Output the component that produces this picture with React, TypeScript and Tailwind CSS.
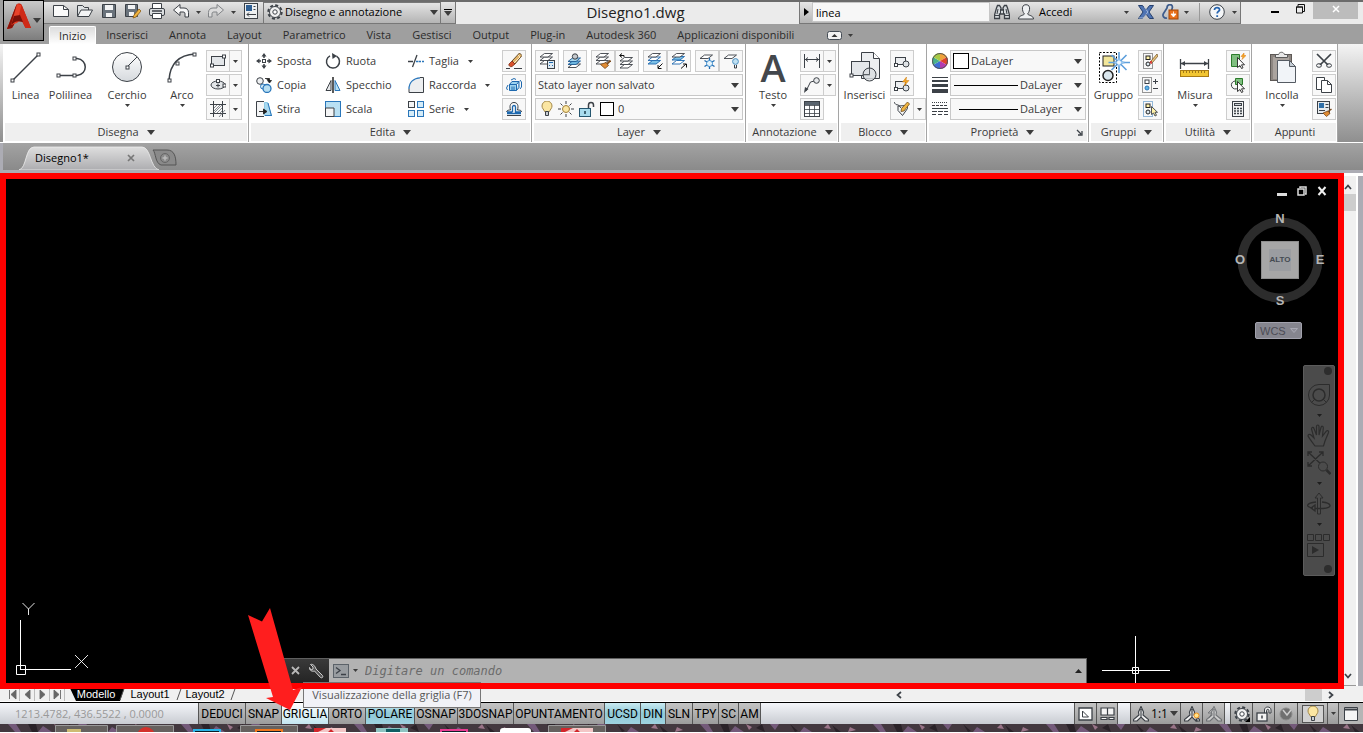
import type { ReactNode } from "react"

type IconProps = { w?: number; h?: number; className?: string; children: ReactNode }

function Icon({ w = 16, h = 16, className = "", children }: IconProps) {
  return (
    <svg
      width={w}
      height={h}
      viewBox={`0 0 ${w} ${h}`}
      fill="none"
      stroke="#3c4147"
      className={`shrink-0 ${className}`}
      aria-hidden
    >
      {children}
    </svg>
  )
}

function Caret({ big = false, className = "" }: { big?: boolean; className?: string }) {
  return big ? (
    <svg width="8" height="5" viewBox="0 0 8 5" className={`shrink-0 ${className}`} aria-hidden>
      <path d="M0 0h8L4 5z" fill="#3c3c3c" />
    </svg>
  ) : (
    <svg width="5" height="3" viewBox="0 0 5 3" className={`shrink-0 ${className}`} aria-hidden>
      <path d="M0 0h5L2.5 3z" fill="#3c3c3c" />
    </svg>
  )
}

const node = (x: number, y: number) => (
  <rect x={x - 1.5} y={y - 1.5} width="3" height="3" fill="#fff" stroke="#3c4147" />
)

/* ---------- big ribbon icons ---------- */

const LineIcon = () => (
  <Icon w={32} h={32}>
    <path d="M3 29L29 3" strokeWidth="1.5" />
    {node(2.5, 29.5)}
    {node(28.5, 3.5)}
  </Icon>
)
const PolylineIcon = () => (
  <Icon w={32} h={32}>
    <path d="M3 24.5H19.5M19 7.5h3c11 1 11 16 0 17h-3" strokeWidth="1.5" />
    {node(3.5, 24.5)}
    {node(19.5, 24.5)}
    {node(19.5, 7.5)}
  </Icon>
)
const CircleIcon = () => (
  <Icon w={32} h={32}>
    <defs>
      <linearGradient id="disc" x1="0" y1="0" x2="0" y2="1">
        <stop offset="0" stopColor="#fff" />
        <stop offset="1" stopColor="#d5d9dd" />
      </linearGradient>
    </defs>
    <circle cx="16" cy="16" r="14.5" fill="url(#disc)" />
    <path d="M16 16L26 6" />
    {node(16.5, 16.5)}
  </Icon>
)
const ArcIcon = () => (
  <Icon w={32} h={32}>
    <path d="M3 29C4 14 12 4 29 3" strokeWidth="1.5" />
    {node(3.5, 29.5)}
    {node(11.5, 12.5)}
    {node(28.5, 3.5)}
  </Icon>
)
const InsertBlockIcon = () => (
  <Icon w={34} h={32}>
    <path d="M13.5 1.5h12l6 6v20h-18z" fill="#eceef0" />
    <path d="M25.5 1.5v6h6" fill="#fff" />
    <rect x="3.5" y="10.5" width="18" height="14" fill="#e4e7ea" />
    <circle cx="21.5" cy="23.5" r="6.5" fill="#d9dde1" fillOpacity="0.8" />
    <path d="M15 23.5h6.5V17" strokeWidth="0.8" />
    {node(3.5, 24.5)}
  </Icon>
)
const GroupIcon = () => (
  <Icon w={32} h={34}>
    <rect x="1.5" y="2.5" width="17" height="30" stroke="#000" strokeDasharray="2 1.5" />
    <rect x="5" y="6" width="11" height="10" fill="#f3e79b" stroke="#222" />
    <circle cx="10" cy="25.5" r="5" fill="#dbe7ee" stroke="#222" strokeWidth="1.5" />
    <path d="M21 2v21M10.500 12.500H32M13.500 5l15 15M28.500 5l-15 15" stroke="#5d9fdc" strokeWidth="1.6" />
    <path d="M21 6l1.500 5 5 1.500-5 1.500-1.500 5-1.500-5-5-1.500 5-1.500z" fill="#9fcbf2" stroke="#5d9fdc" strokeWidth="0.5" />
    <circle cx="21" cy="12.5" r="2" fill="#f2f9ff" stroke="none" />
  </Icon>
)
const MeasureIcon = () => (
  <Icon w={32} h={32}>
    <path d="M1.5 8v10M29.5 8v10M2 12.500h27" strokeWidth="1.3" />
    <path d="M2 12.500l4-2.500v5zM29 12.500l-4-2.500v5z" fill="#3c4147" stroke="none" />
    <rect x="1.5" y="19.5" width="28" height="6" fill="#f2c531" stroke="#a97a12" />
    <path d="M4.500 20v2M7.500 20v2M10.500 20v2M13.500 20v2M16.500 20v2M19.500 20v2M22.500 20v2M25.500 20v2" stroke="#8a6510" strokeWidth="0.8" />
  </Icon>
)
const PasteIcon = () => (
  <Icon w={32} h={34}>
    <rect x="4.5" y="4.5" width="21" height="26" fill="#8d8681" stroke="#5e5956" />
    <rect x="7" y="7" width="16" height="22" fill="#aaa39e" stroke="none" />
    <path d="M9.500 7.500v-3h3c1-3 5-3 6 0h3v3z" fill="#e8e8e8" stroke="#5a5a5a" />
    <path d="M11.500 10.500h12l6 6v16h-18z" fill="#f1f4f8" stroke="#555b63" />
    <path d="M23.500 10.500v6h6z" fill="#c6ced6" stroke="#555b63" />
  </Icon>
)

/* ---------- small ribbon icons ---------- */

const RectIcon = () => (
  <Icon>
    <rect x="1.5" y="3.5" width="13" height="9" fill="#e3e6e9" />
    {node(2, 12.5)}
    {node(14, 3.5)}
  </Icon>
)
const EllipseIcon = () => (
  <Icon>
    <ellipse cx="8" cy="8" rx="7" ry="4" fill="#e3e6e9" />
    <path d="M6 8.500h4M8 6.500v4" />
    {node(8, 4)}
    {node(14.5, 8.5)}
  </Icon>
)
const HatchIcon = () => (
  <Icon>
    <path d="M3.5 0v16M12.5 0v16M0 3.5h16M0 12.500h16" />
    <path d="M4 7l3-3M4 10l6-6M4 12l8-8M7 12l5-5M10 12l2-2M9 16l6-7" stroke="#6a7077" strokeWidth="0.8" />
  </Icon>
)
const MoveIcon = () => (
  <Icon>
    <path d="M8 0l2.500 3.500h-5zM8 16l2.500-3.500h-5zM0 8l3.500-2.500v5zM16 8l-3.500-2.500v5z" fill="#3c4147" stroke="none" />
    <path d="M8 3v2M8 11v2M3 8h2M11 8h2" strokeWidth="1.5" />
    <rect x="6.5" y="6.5" width="3" height="3" fill="#fff" />
  </Icon>
)
const CopyIcon = () => (
  <Icon>
    <circle cx="4" cy="4" r="3.3" fill="#eef0f2" />
    <path d="M9 1.500h4.500V4M11.500 3.500l2 2.500 2-2.500z" fill="#222" stroke="#222" strokeWidth="0.8" />
    <circle cx="7" cy="9.5" r="2.5" stroke="#2a76ba" fill="#d5ecf8" />
    <circle cx="11" cy="11.5" r="4" stroke="#2a76ba" fill="#b7def2" strokeWidth="1.3" />
  </Icon>
)
const StretchIcon = () => (
  <Icon>
    <path d="M8.500 1.500h3l4 13h-7z" fill="#a9d9ef" stroke="#8ccae6" />
    <path d="M9 14.500h6.500M12 2l3.500 13" stroke="#2a76ba" />
    <path d="M8 .5H.5v15H8" fill="#f4f5f6" />
    <path d="M3 10.500h6M7.500 8l3.500 2.500L7.500 13z" fill="#222" stroke="#222" strokeWidth="0.9" />
  </Icon>
)
const RotateIcon = () => (
  <Icon>
    <path d="M5 2.800a6.500 6.500 0 1 0 6.500.3" strokeWidth="1.5" />
    <path d="M7 0l5 3-4.500 3z" fill="#3c4147" stroke="none" />
  </Icon>
)
const MirrorIcon = () => (
  <Icon>
    <path d="M6 3.500v10H1z" fill="#e6e8ea" />
    <path d="M10 3.500v10h5z" fill="#b9e0f3" stroke="#2a76ba" />
    <path d="M8 0v16" stroke="#000" strokeWidth="1.3" />
  </Icon>
)
const ScaleIcon = () => (
  <Icon>
    <rect x=".5" y=".5" width="15" height="15" fill="#b9e0f3" stroke="#2a76ba" />
    <path d="M.5 7v8.500H9V7z" fill="#f4f5f6" />
  </Icon>
)
const TrimIcon = () => (
  <Icon>
    <path d="M0 8.500h5M4.500 14L9 2" strokeWidth="1.3" />
    <path d="M8 8.500h2.500M11 8.500h2M14 8.500h2" stroke="#2a76ba" strokeWidth="1.3" />
  </Icon>
)
const FilletIcon = () => (
  <Icon>
    <path d="M1 15C1 6 6 1 13 1h2.500v14.500H.5z" fill="#eceef0" stroke="none" />
    <path d="M12 .5h3.500v15H1V12" />
    <path d="M1 12C1 5 6 1 12 .8" stroke="#2a76ba" strokeWidth="1.3" />
  </Icon>
)
const ArrayIcon = () => (
  <Icon>
    <rect x=".5" y=".5" width="6" height="6" fill="#f3f4f5" />
    <rect x="9.5" y=".5" width="6" height="6" stroke="#2a76ba" fill="#d5ecf8" />
    <rect x=".5" y="9.5" width="6" height="6" stroke="#2a76ba" fill="#d5ecf8" />
    <rect x="9.5" y="9.5" width="6" height="6" stroke="#2a76ba" fill="#d5ecf8" />
  </Icon>
)
const EraseIcon = () => (
  <Icon>
    <path d="M13.500 0L6 8l3 3 7-8.500z" fill="#e2b46a" stroke="#5a3f1c" strokeWidth="0.9" />
    <path d="M12 2l2 2-6 6" stroke="#fbe9c4" />
    <path d="M6 8l-3 3c-.8 1.500 1.500 3.500 3 2.500L9 11z" fill="#d9502b" stroke="#7c2e16" strokeWidth="0.8" />
    <path d="M0 15.500h4M8 15.500h8" />
  </Icon>
)
const ExplodeIcon = () => (
  <Icon>
    <path d="M3.500 7.500h7v6h-7zM3.500 7.500l2.500-3h7l-2.500 3M10.500 13.500l2.500-3v-6" fill="#9dd4ef" stroke="#1d68ae" />
    <path d="M2 8l-1.500 3 1 2M5 3L8 1.500l2 1M14 3l1.500 2v5L14 12M6 9.500v4M8 9.500v4" stroke="#1d68ae" />
  </Icon>
)
const OffsetIcon = () => (
  <Icon>
    <path d="M1 14.500h14M.5 11C1 9 3 9 4.500 9 3 4 5 1.500 8 1.500S13 4 11.500 9c2 0 4 0 4 2" />
    <path d="M1 12.500h14M6.500 11V6a1.500 1.500 0 0 1 3 0v5H15M1 11h5.500" stroke="#1d68ae" strokeWidth="1.3" />
  </Icon>
)

const stack = (y: number, fill: string, stroke: string) => (
  <path d={`M1 ${y + 3.5}h8l4.500-3.500h-8z`} fill={fill} stroke={stroke} strokeWidth="0.9" />
)
const LayerPropsIcon = () => (
  <Icon>
    {stack(7.5, "#fff", "#3c4147")}
    {stack(4, "#fff", "#3c4147")}
    {stack(0.5, "#fff", "#3c4147")}
    <rect x="8.5" y="7.5" width="7" height="8" fill="#dfeaf2" />
    <path d="M10 9.500h4M10 12.500h1M13 12.500h1" stroke="#1d68ae" />
  </Icon>
)
const LayerCurrentIcon = () => (
  <Icon>
    {stack(11, "#fff", "#3c4147")}
    {stack(8, "#6db6df", "#1d5a94")}
    {stack(5, "#a9d8ee", "#1d5a94")}
    <circle cx="8" cy="3.5" r="2.7" fill="#c4c8cc" />
  </Icon>
)
const LayerMatchIcon = () => (
  <Icon>
    {stack(7.5, "#fff", "#3c4147")}
    {stack(4, "#fff", "#3c4147")}
    {stack(0.5, "#fff", "#3c4147")}
    <path d="M15.500 7.500l-4 4" stroke="#7a4a1d" strokeWidth="1.8" />
    <path d="M5.500 11.500l5.500-2 2.500 3-3.500 3z" fill="#e08b33" stroke="#7a4a1d" strokeWidth="0.8" />
  </Icon>
)
const LayerPrevIcon = () => (
  <Icon>
    {stack(11.5, "#fff", "#3c4147")}
    {stack(8, "#fff", "#3c4147")}
    {stack(4.5, "#fff", "#3c4147")}
    <path d="M5 4V2.500H1M3 .5L.5 2.500 3 4.500" stroke="#111" />
  </Icon>
)
const LayerIsoIcon = ({ out = false }: { out?: boolean }) => (
  <Icon>
    {stack(out ? 3.5 : 7.5, "#7cc0e6", "#1d68ae")}
    {stack(out ? 7.5 : 4, "#fff", "#1d68ae")}
    {stack(0.5, "#fff", "#3c4147")}
    {out ? <path d="M10 15.500l5-4.500M12 11h3.500v3.500" stroke="#111" /> : <path d="M15.500 10.500l-4.500 4.500M14.500 15.500H11V12" stroke="#111" />}
  </Icon>
)
const LayerFreezeIcon = () => (
  <Icon>
    {stack(2, "#fff", "#3c4147")}
    <path d="M10.500 5v11M5.500 7.500l10 6M15.500 7.500l-10 6" stroke="#1d68ae" strokeWidth="1.3" />
    <circle cx="10.5" cy="10.5" r="3" stroke="#3c8ccc" fill="#e4f3fb" />
  </Icon>
)
const LayerOffIcon = () => (
  <Icon>
    {stack(2, "#fff", "#3c4147")}
    <circle cx="12.5" cy="8.5" r="2.9" fill="#bfe0f2" stroke="#4d8fc0" />
    <path d="M11.500 12v3h2v-3" stroke="#3c4147" />
  </Icon>
)
const BulbIcon = () => (
  <Icon w={12}>
    <path d="M3.500 10.500C3 8.500 1 7.500 1 5a5 5 0 0 1 10 0c0 2.500-2 3.500-2.500 5.500z" fill="#fbe6a2" stroke="#a58a4a" />
    <path d="M4.500 10.500h3v4h-3z" fill="#c9cdd1" />
  </Icon>
)
const SunIcon = () => (
  <Icon>
    <path d="M8 0v3M8 13v3M0 8h3M13 8h3M2.500 2.500l2 2M11.500 11.500l2 2M13.500 2.500l-2 2M4.500 11.500l-2 2" />
    <circle cx="8" cy="8" r="3.5" fill="#fbe6a2" stroke="#a17f37" />
  </Icon>
)
const UnlockIcon = () => (
  <Icon>
    <path d="M9.500 8V4c0-3.500 5-3.500 5 0v2" strokeWidth="1.5" />
    <rect x=".5" y="7.5" width="11" height="8" fill="#a9dcee" stroke="#25566f" />
    <path d="M6 10v3" stroke="#1b3c4d" strokeWidth="1.5" />
  </Icon>
)

const DimIcon = () => (
  <Icon>
    <path d="M.5 1v14M15.500 1v14M1 6.500h14M4 4.500L1.500 6.500 4 8.500M12 4.500l2.500 2L12 8.500" />
  </Icon>
)
const LeaderIcon = () => (
  <Icon>
    <path d="M2 14L6.500 5l4-1" />
    <path d="M0 16l1-6 3.500 2z" fill="#3c4147" stroke="none" />
    <circle cx="12.5" cy="3.5" r="2.8" fill="#e6e8ea" />
  </Icon>
)
const TableIcon = () => (
  <Icon>
    <rect x=".5" y=".5" width="15" height="15" fill="#fff" />
    <path d="M1 1h14v3H1z" fill="#59636d" stroke="none" />
    <path d="M1 4.500h14M1 8.500h14M1 12.500h14M5.500 4v11M10.500 4v11" strokeWidth="0.8" />
  </Icon>
)
const CreateBlockIcon = ({ bolt = false }: { bolt?: boolean }) => (
  <Icon>
    <rect x="1.5" y="4.5" width="10" height="7" fill="#eceef0" />
    <circle cx="12" cy="11" r="3" fill="#dfe3e6" />
    {node(2, 12)}
    {bolt && <path d="M12.500 0L8.500 5h3L10 9l5-5.500h-3z" fill="#f7a823" stroke="#c9760c" strokeWidth="0.5" />}
  </Icon>
)
const EditAttrIcon = () => (
  <Icon>
    <path d="M4 5l9-.5.5 3-5 7-4.500-5z" fill="#f4f5f6" />
    <path d="M0 1c1 2 2 3 4.500 3L7 7" />
    <path d="M13.500 1L7.500 7.500l-.5 3 3-.5 5.500-7z" fill="#f0b440" stroke="#6b4a1c" strokeWidth="0.8" />
  </Icon>
)
const ColorWheel = () => (
  <Icon>
    <g stroke="none">
      <path d="M8 8L8 0A8 8 0 0 1 15 4z" fill="#f0a23a" />
      <path d="M8 8L15 4A8 8 0 0 1 15 12z" fill="#e0412d" />
      <path d="M8 8L15 12A8 8 0 0 1 8 16z" fill="#b43ab0" />
      <path d="M8 8L8 16A8 8 0 0 1 1 12z" fill="#3f6fd6" />
      <path d="M8 8L1 12A8 8 0 0 1 1 4z" fill="#49b28a" />
      <path d="M8 8L1 4A8 8 0 0 1 8 0z" fill="#a8ca45" />
    </g>
    <circle cx="8" cy="8" r="7.5" stroke="#555" />
  </Icon>
)
const WeightIcon = () => (
  <Icon>
    <path d="M0 .5h16" />
    <path d="M0 4h16" strokeWidth="2" />
    <path d="M0 8.500h16" strokeWidth="3" />
    <path d="M0 14h16" strokeWidth="4" />
  </Icon>
)
const LinetypeIcon = () => (
  <Icon>
    <path d="M0 1.500h16" strokeDasharray="1 1" />
    <path d="M0 4.500h16" strokeDasharray="3 1" />
    <path d="M0 7.500h16" />
    <path d="M0 10.500h16" strokeDasharray="5 1" />
    <path d="M0 13.500h16" strokeDasharray="4 2" />
  </Icon>
)

const groupBase = (stroke: string) => (
  <>
    <rect x="1.5" y=".5" width="9" height="15" stroke={stroke} strokeDasharray="1 1" />
    <rect x="4" y="3" width="4" height="3.5" fill="#fff2a8" stroke="#222" />
    <circle cx="6" cy="11" r="2" fill="#dbe7ee" stroke="#222" />
  </>
)
const UngroupIcon = () => (
  <Icon>
    {groupBase("#333")}
    <path d="M15 1L9 8l1.500 1.500L16 3z" fill="#e8c37a" stroke="#6b4a1c" strokeWidth="0.7" />
    <path d="M9 8l-1 1.500 1.500 1z" fill="#d9302b" stroke="#d9302b" />
  </Icon>
)
const GroupEditIcon = () => (
  <Icon>
    <rect x=".5" y=".5" width="9" height="15" stroke="#333" strokeDasharray="1 1" />
    <rect x="3" y="3" width="4" height="3.5" fill="#fff" />
    <circle cx="5" cy="11" r="2" fill="#5fb4e0" stroke="#2a76ba" />
    <path d="M11 4.500h5M13.500 2v5M11 11.500h5" />
  </Icon>
)
const GroupSelectIcon = () => (
  <Icon>
    {groupBase("#2a76ba")}
    <path d="M9.500 5.500v8l2-1.500 1.500 3 1.500-.7-1.500-3h2.500z" fill="#fff2a8" strokeWidth="0.9" />
  </Icon>
)
const pointer = <path d="M7.500 4.500v10l2.500-2 1.500 3 1.500-.7-1.500-3h3z" fill="#fff" stroke="#222" strokeWidth="0.9" />
const QuickSelectIcon = () => (
  <Icon>
    <path d="M1.500 1.500h8v12h-8z" fill="#7fbf7f" stroke="#2b7a2b" />
    {pointer}
    <path d="M14 0l-3 3.500h2l-1 3 4-4h-2z" fill="#f7a823" stroke="#d9760c" strokeWidth="0.5" />
  </Icon>
)
const SelectAllIcon = () => (
  <Icon>
    <path d="M5.500 1.500h7v6h-7z" fill="#7fbf7f" stroke="#2b7a2b" />
    <path d="M5 4a4 4 0 1 0 3 7" />
    {pointer}
  </Icon>
)
const CalcIcon = () => (
  <Icon>
    <rect x="2.5" y=".5" width="11" height="15" fill="#f3f4f5" />
    <rect x="4.5" y="2.5" width="7" height="2" fill="#cfd4d8" />
    <path d="M4 7.500h8M4 10h8M4 12.500h8" strokeDasharray="2 1" strokeWidth="1.3" />
  </Icon>
)
const CutIcon = () => (
  <Icon>
    <path d="M1 1l11 11M15 1L4 12" strokeWidth="1.7" />
    <ellipse cx="3" cy="12.5" rx="2.5" ry="1.8" />
    <ellipse cx="13" cy="12.5" rx="2.5" ry="1.8" />
  </Icon>
)
const CopyClipIcon = () => (
  <Icon>
    <path d="M5 12.500H.5V.5h8V3" fill="#fff" />
    <path d="M5.500 3.500h6l4 4v8h-10z" fill="#fff" />
    <path d="M11.500 3.500v4h4" />
  </Icon>
)
const MatchPropIcon = () => (
  <Icon>
    <rect x="1.5" y=".5" width="12" height="12" fill="#e7ebee" />
    <rect x="3" y="2" width="5" height="5" fill="#2f6fa8" stroke="none" />
    <path d="M9.500 3.500h3M9.500 6.500h3M3 9.500h6" />
    <path d="M15.500 8l-4 3" stroke="#7a4a1d" strokeWidth="1.5" />
    <path d="M7 12l5-2 2 2.500-3.500 3z" fill="#e08b33" stroke="#7a4a1d" strokeWidth="0.8" />
  </Icon>
)

/* ---------- ribbon building blocks ---------- */

function Panel({ title, width, caret = true, launcher = false, children }: {
  title: string
  width: string
  caret?: boolean
  launcher?: boolean
  children: ReactNode
}) {
  return (
    <section className={`flex shrink-0 flex-col border-r border-[#a5a5a5] bg-white ${width}`} aria-label={title}>
      <div className="flex h-[79px] pt-[6px]">{children}</div>
      <div className="mr-px ml-[2px] flex h-[18px] items-center bg-[#efefef]">
        <button type="button" className="flex flex-1 items-center justify-center gap-2">
          {title}
          {caret && <Caret big />}
        </button>
        {launcher && (
          <button type="button" aria-label="Apri finestra" className="mr-1">
            <Icon w={7} h={7}>
              <path d="M1 1l4 4M6 2v4H2" strokeWidth="1.3" />
            </Icon>
          </button>
        )}
      </div>
    </section>
  )
}

function BigButton({ label, width, caret = false, children }: {
  label: string
  width: string
  caret?: boolean
  children: ReactNode
}) {
  return (
    <button type="button" className={`flex h-[70px] shrink-0 flex-col items-center ${width}`}>
      <span className="flex h-[34px] items-center">{children}</span>
      <span className="mt-[3px] h-4 leading-4">{label}</span>
      {caret && <Caret className="mt-px" />}
    </button>
  )
}

function Small({ label, caret = false, children }: { label: string; caret?: boolean; children: ReactNode }) {
  return (
    <div className="flex h-[22px] w-max border border-[#cdcdcd] bg-[#f8f8f8]">
      <button type="button" aria-label={label} className="flex w-[22px] items-center justify-center">
        {children}
      </button>
      {caret && (
        <button
          type="button"
          aria-label={`${label}, altre opzioni`}
          className="flex w-3 items-center justify-center border-l border-[#cdcdcd]"
        >
          <Caret />
        </button>
      )}
    </div>
  )
}

function Tool({ label, caret = false, children }: { label: string; caret?: boolean; children: ReactNode }) {
  return (
    <button type="button" className="flex h-[22px] items-center gap-[5px]">
      {children}
      <span>{label}</span>
      {caret && <Caret className="ml-1" />}
    </button>
  )
}

function Combo({ label, value, width, children }: {
  label: string
  value: string
  width: string
  children?: ReactNode
}) {
  return (
    <div className={`relative flex h-[22px] items-center border border-[#c8c8c8] bg-[#f8f8f8] ${width}`}>
      {children}
      <select aria-label={label} defaultValue={value} className="h-full min-w-0 flex-1 appearance-none bg-transparent pl-[2px] outline-none">
        <option>{value}</option>
      </select>
      <Caret big className="pointer-events-none absolute right-[3px]" />
    </div>
  )
}

const col = "flex flex-col gap-[2px]"

function Ribbon() {
  return (
    <div className="flex h-[99px] border-b border-white bg-linear-to-b from-[#f4f4f4] to-[#8f8f8f] pl-[3px]">
      <Panel title="Disegna" width="w-[246px]">
        <BigButton label="Linea" width="w-[45px]"><LineIcon /></BigButton>
        <BigButton label="Polilinea" width="w-[45px]"><PolylineIcon /></BigButton>
        <BigButton label="Cerchio" width="w-[68px]" caret><CircleIcon /></BigButton>
        <BigButton label="Arco" width="w-[42px]" caret><ArcIcon /></BigButton>
        <div className={`ml-[3px] ${col}`}>
          <Small label="Rettangolo" caret><RectIcon /></Small>
          <Small label="Ellisse" caret><EllipseIcon /></Small>
          <Small label="Tratteggio" caret><HatchIcon /></Small>
        </div>
      </Panel>

      <Panel title="Edita" width="w-[283px]">
        <div className={`ml-[7px] w-[69px] ${col}`}>
          <Tool label="Sposta"><MoveIcon /></Tool>
          <Tool label="Copia"><CopyIcon /></Tool>
          <Tool label="Stira"><StretchIcon /></Tool>
        </div>
        <div className={`w-[83px] ${col}`}>
          <Tool label="Ruota"><RotateIcon /></Tool>
          <Tool label="Specchio"><MirrorIcon /></Tool>
          <Tool label="Scala"><ScaleIcon /></Tool>
        </div>
        <div className={`w-[94px] ${col}`}>
          <Tool label="Taglia" caret><TrimIcon /></Tool>
          <Tool label="Raccorda" caret><FilletIcon /></Tool>
          <Tool label="Serie" caret><ArrayIcon /></Tool>
        </div>
        <div className={col}>
          <Small label="Cancella"><EraseIcon /></Small>
          <Small label="Esplodi"><ExplodeIcon /></Small>
          <Small label="Offset"><OffsetIcon /></Small>
        </div>
      </Panel>

      <Panel title="Layer" width="w-[214px]">
        <div className={`ml-[3px] ${col}`}>
          <div className="flex gap-1">
            <Small label="Proprietà layer"><LayerPropsIcon /></Small>
            <Small label="Rendi corrente"><LayerCurrentIcon /></Small>
            <div className="flex">
              <Small label="Corrispondenza layer"><LayerMatchIcon /></Small>
              <Small label="Layer precedente"><LayerPrevIcon /></Small>
            </div>
            <div className="flex">
              <Small label="Isola"><LayerIsoIcon /></Small>
              <Small label="Annulla isolamento"><LayerIsoIcon out /></Small>
            </div>
            <div className="flex">
              <Small label="Congela"><LayerFreezeIcon /></Small>
              <Small label="Disattiva"><LayerOffIcon /></Small>
            </div>
          </div>
          <Combo label="Stato layer" value="Stato layer non salvato" width="w-[208px]" />
          <Combo label="Layer corrente" value="0" width="w-[208px]">
            <span className="flex items-center gap-[5px] pl-[5px]">
              <BulbIcon />
              <SunIcon />
              <UnlockIcon />
              <span className="mr-[2px] h-[14px] w-[14px] border border-black bg-white" />
            </span>
          </Combo>
        </div>
      </Panel>

      <Panel title="Annotazione" width="w-[93px]">
        <BigButton label="Testo" width="w-[54px]" caret>
          <span className="text-[38px] leading-8 font-semibold text-[#43474c]">A</span>
        </BigButton>
        <div className={col}>
          <Small label="Quota lineare" caret><DimIcon /></Small>
          <Small label="Direttrice" caret><LeaderIcon /></Small>
          <Small label="Tabella"><TableIcon /></Small>
        </div>
      </Panel>

      <Panel title="Blocco" width="w-[88px]">
        <BigButton label="Inserisci" width="w-[51px]"><InsertBlockIcon /></BigButton>
        <div className={col}>
          <Small label="Crea blocco"><CreateBlockIcon /></Small>
          <Small label="Editor blocchi"><CreateBlockIcon bolt /></Small>
          <Small label="Modifica attributi" caret><EditAttrIcon /></Small>
        </div>
      </Panel>

      <Panel title="Proprietà" width="w-[162px]" launcher>
        <div className={`ml-[5px] ${col}`}>
          <div className="flex items-center gap-[2px]">
            <ColorWheel />
            <Combo label="Colore oggetto" value="DaLayer" width="w-[136px]">
              <span className="ml-[2px] h-4 w-4 border border-black bg-white" />
            </Combo>
          </div>
          <div className="flex items-center gap-[2px]">
            <WeightIcon />
            <Combo label="Spessore linea" value="DaLayer" width="w-[136px]">
              <span className="ml-[3px] h-px w-[64px] bg-black" />
            </Combo>
          </div>
          <div className="flex items-center gap-[2px]">
            <LinetypeIcon />
            <Combo label="Tipo di linea" value="DaLayer" width="w-[136px]">
              <span className="ml-2 h-px w-[59px] bg-black" />
            </Combo>
          </div>
        </div>
      </Panel>

      <Panel title="Gruppi" width="w-[75px]">
        <BigButton label="Gruppo" width="w-[49px]"><GroupIcon /></BigButton>
        <div className={col}>
          <Small label="Separa"><UngroupIcon /></Small>
          <Small label="Modifica gruppo"><GroupEditIcon /></Small>
          <Small label="Selezione gruppo"><GroupSelectIcon /></Small>
        </div>
      </Panel>

      <Panel title="Utilità" width="w-[88px]">
        <BigButton label="Misura" width="w-[62px]" caret><MeasureIcon /></BigButton>
        <div className={col}>
          <Small label="Selezione rapida"><QuickSelectIcon /></Small>
          <Small label="Seleziona tutto"><SelectAllIcon /></Small>
          <Small label="Calcolatrice"><CalcIcon /></Small>
        </div>
      </Panel>

      <Panel title="Appunti" width="w-[86px]" caret={false}>
        <BigButton label="Incolla" width="w-[60px]" caret><PasteIcon /></BigButton>
        <div className={col}>
          <Small label="Taglia negli appunti"><CutIcon /></Small>
          <Small label="Copia negli appunti"><CopyClipIcon /></Small>
          <Small label="Copia proprietà"><MatchPropIcon /></Small>
        </div>
      </Panel>
    </div>
  )
}

/* ---------- title bar ---------- */

const quickActions = [
  {
    label: "Nuovo",
    icon: (
      <Icon>
        <path d="M.5 2.500h10l5 4v7H.5z" fill="#fafafa" />
        <path d="M10.500 2.500v4h5" />
      </Icon>
    ),
  },
  {
    label: "Apri",
    icon: (
      <Icon>
        <path d="M.5 13V2.500h5l2 2h4V7" fill="#dfe2e4" />
        <path d="M.5 13.500L4 7h11.500L12 13.500z" fill="#f3f4f5" />
      </Icon>
    ),
  },
  {
    label: "Salva",
    icon: (
      <Icon>
        <path d="M1.500 1.500h13v13h-13z" fill="#69727b" />
        <path d="M4 2h8v5H4zM5 10h6v4H5z" fill="#f2f3f4" stroke="none" />
      </Icon>
    ),
  },
  {
    label: "Salva con nome",
    icon: (
      <Icon>
        <path d="M.5 1.500h12v12H.5z" fill="#69727b" />
        <path d="M3 2h7v4H3zM4 9h5v4H4z" fill="#f2f3f4" stroke="none" />
        <path d="M14 6l-5 6-1 3 3-1 5-6z" fill="#f0b440" stroke="#8a5a14" strokeWidth="0.8" />
      </Icon>
    ),
  },
  {
    label: "Stampa",
    icon: (
      <Icon>
        <path d="M3.500 6V.5h9V6" fill="#fff" />
        <rect x=".5" y="5.5" width="15" height="7" rx="1.5" fill="#dcdfe1" />
        <path d="M3.500 10.500h9v5h-9z" fill="#fff" />
        <path d="M3 8h10" strokeWidth="1.5" />
      </Icon>
    ),
  },
  {
    label: "Annulla",
    caret: true,
    icon: (
      <Icon>
        <path d="M.5 7L7 1.500v3.500h4c3 0 4.500 2 4.500 4.500V14H12v-3c0-1.500-.5-2-2-2H7v3.500z" fill="#f7f7f7" />
      </Icon>
    ),
  },
  {
    label: "Ripeti",
    caret: true,
    icon: (
      <Icon>
        <path d="M15.500 7L9 1.500v3.500H5C2 5 .5 7 .5 9.500V14H4v-3c0-1.500.5-2 2-2h3v3.500z" fill="#dcdcdc" stroke="#808386" />
      </Icon>
    ),
  },
  {
    label: "Finestre",
    icon: (
      <Icon>
        <rect x="1.5" y=".5" width="13" height="15" fill="#eef0f1" />
        <rect x="3" y="2" width="6" height="6" fill="#2f5f93" stroke="none" />
        <path d="M10.500 3.500h2M10.500 6.500h2M4 11.500h9M6 9.500l-2 2 2 2" />
      </Icon>
    ),
  },
]

const gear = (
  <>
    <circle cx="8" cy="8" r="6.7" strokeWidth="2" strokeDasharray="3 2.260" />
    <circle cx="8" cy="8" r="5.5" fill="#f2f2f2" />
    <circle cx="8" cy="8" r="2.2" fill="#fff" />
  </>
)

const barFill = "bg-linear-to-b from-[#e6e6e6] to-[#b4b4b4]"

function TitleBar() {
  return (
    <div className="flex h-6 items-start border-t-2 border-[#6b6b6b] bg-[#ebebeb] text-black">
      <div className={`flex h-[22px] shrink-0 items-center border-b border-[#777] pl-[5px] ${barFill}`}>
        {quickActions.map((action) => (
          <div key={action.label} className="flex items-center">
            <button type="button" aria-label={action.label} className="flex h-5 w-6 justify-center">
              {action.icon}
            </button>
            {action.caret && (
              <button type="button" aria-label={`${action.label}, elenco`} className="flex w-[11px] justify-center">
                <Caret />
              </button>
            )}
          </div>
        ))}
        <div className="relative flex h-[22px] w-[178px] items-center border border-[#777] pb-px pl-[3px]">
          <Icon>{gear}</Icon>
          <select aria-label="Area di lavoro" className="min-w-0 flex-1 appearance-none bg-transparent pl-[2px] outline-none">
            <option>Disegno e annotazione</option>
          </select>
          <Caret big className="pointer-events-none absolute right-[2px]" />
        </div>
        <button type="button" aria-label="Personalizza" className="flex h-[22px] w-[15px] flex-col items-center justify-center gap-px border-r border-b border-[#777]">
          <span className="h-px w-2 bg-black" />
          <Caret big />
        </button>
      </div>

      <h1 className="flex-1 pl-[16px] text-center text-[15px] leading-5 text-[#222]">Disegno1.dwg</h1>

      <div className={`flex h-[22px] w-[442px] shrink-0 items-center border-x border-b border-[#777] pb-px ${barFill}`}>
        <button type="button" aria-label="Espandi ricerca" className="flex w-3 justify-center">
          <svg width="5" height="8" viewBox="0 0 5 8" aria-hidden>
            <path d="M0 0v8l5-4z" fill="#000" />
          </svg>
        </button>
        <input aria-label="Cerca" defaultValue="linea" className="h-5 w-[178px] border border-[#c6c6c6] bg-[#f7f7f7] pl-[3px] outline-none" />
        <button type="button" aria-label="Avvia ricerca" className="flex w-6 justify-center">
          <Icon>
            <path d="M2.500 4l1-2.500h2L7 4v2h2V4l1.500-2.500h2l1 2.500 2 7v3.500h-5V10h-5v4.500h-5V11z" fill="#d5d9dc" strokeWidth="1.3" />
            <path d="M1 11.500h4.500M10.500 11.500H15M6.500 5v5M9.500 5v5M4 5l-1 5M12 5l1 5" />
          </Icon>
        </button>
        <button type="button" className="flex w-[115px] items-center gap-[5px] pl-1">
          <Icon>
            <path d="M8 .7c3 0 4 2.300 3.500 5C11.200 8 10 9.500 9.500 10c1 1.500 6 1.500 6 5H.5c0-3.500 5-3.500 6-5C6 9.500 4.800 8 4.500 5.700 4 3 5 .7 8 .7z" fill="#eef0f2" />
          </Icon>
          Accedi
          <Caret className="ml-auto" />
        </button>
        <button type="button" aria-label="Exchange" className="ml-[9px]">
          <Icon>
            <path d="M.5 1.500h4L8 6l3.500-4.500h4L11 8l4.500 6.500h-4L8 10l-3.500 4.500h-4L5 8z" fill="#4f74b4" stroke="#26406e" />
            <path d="M1 14h4l5-6-4-5" stroke="#b9cae6" strokeWidth="0.8" />
          </Icon>
        </button>
        <button type="button" aria-label="Autodesk 360" className="ml-2 flex items-center gap-[5px]">
          <Icon w={17}>
            <path d="M5 14c-3 .5-5-2-3.500-4.500L5 4c0-4 5-4.500 5.500-1l-1 4" stroke="#3e5c8c" strokeWidth="1.7" />
            <rect x="7" y="6" width="9" height="9" fill="#e9701b" stroke="#a14708" />
            <path d="M11.500 7.500v3M9 10h5l-2.500 3z" stroke="#fff" fill="#fff" strokeWidth="0.8" />
          </Icon>
          <Caret />
        </button>
        <span className="ml-[10px] h-[18px] w-px bg-[#999]" />
        <button type="button" aria-label="Guida" className="ml-[9px] flex items-center gap-[7px]">
          <Icon>
            <circle cx="8" cy="8" r="7.3" fill="#f4f6f8" />
            <path d="M5.500 6c0-3.500 5.500-3 5 0-.3 1.500-2.300 1.500-2.300 3.500M8.200 11.300v1.700" stroke="#2563ae" strokeWidth="1.8" />
          </Icon>
          <Caret />
        </button>
      </div>

      <div className="flex w-[122px] shrink-0 items-center">
        <button type="button" aria-label="Riduci a icona" className="ml-[22px] flex h-[17px] w-6 items-center justify-center">
          <span className="mt-[2px] h-[2px] w-2 bg-black" />
        </button>
        <button type="button" aria-label="Ripristina" className="flex h-[17px] w-[26px] items-start justify-center pt-[2px]">
          <Icon w={9} h={10}>
            <path d="M2 2.500V.5h6.500v7H7M.5 3h6v6h-6zM0 3h7" stroke="#111" />
          </Icon>
        </button>
        <button type="button" aria-label="Chiudi" className="flex h-[17px] w-[45px] items-center justify-center bg-[#bcbcbc] pb-1">
          <Icon w={8} h={8}>
            <path d="M1 1l6 6M7 1L1 7" stroke="#fff" strokeWidth="1.5" />
          </Icon>
        </button>
      </div>
    </div>
  )
}

const ribbonTabs = [
  "Inizio",
  "Inserisci",
  "Annota",
  "Layout",
  "Parametrico",
  "Vista",
  "Gestisci",
  "Output",
  "Plug-in",
  "Autodesk 360",
  "Applicazioni disponibili",
]

function Header() {
  return (
    <header className="flex h-11 bg-[#9f9f9f] pl-[3px]">
      <button
        type="button"
        aria-label="Menu applicazione"
        className="flex h-[41px] w-[41px] shrink-0 items-center gap-[2px] border border-black bg-linear-to-b from-[#c9c9c9] to-[#7d7d7d] pl-[3px]"
      >
        <svg width="24" height="27" viewBox="0 0 24 27" className="mb-2 shrink-0" aria-hidden>
          <path d="M9.500 1.500C10.500 0 13.500 0 14.500 1.500L24 25h-5.500l-3-6c-2-1-5-1-7 0L5 25l-5 1z" fill="#c3200f" />
          <path d="M9.500 1.500L0 26l5-1 7-12z" fill="#8a1208" />
          <path d="M10 1l4.500 1L17 13l-7 7-6 2z" fill="#e8432a" />
          <path d="M14.500 1.500L24 25h-5.500L15 18l-3-6z" fill="#cf2a17" />
          <path d="M7 13l6-1 3 7c-3-1-6-1-8 0l-4 3z" fill="#7a1008" />
        </svg>
        <Caret big />
      </button>
      <div className="min-w-0 flex-1">
        <TitleBar />
        <nav className="flex h-5 items-end pl-[5px] text-[#2b2b2b]">
          {ribbonTabs.map((tab, i) => (
            <button
              key={tab}
              type="button"
              className={
                i === 0
                  ? "h-[18px] rounded-t-xs border border-b-0 border-white bg-linear-to-b from-[#dcdcdc] to-white px-[9px] leading-4"
                  : "h-[18px] pr-[11px] pl-[10px] leading-[18px]"
              }
            >
              {tab}
            </button>
          ))}
          <button type="button" aria-label="Riduci barra multifunzione" className="ml-[22px] flex h-[18px] items-center gap-[6px]">
            <svg width="15" height="9" viewBox="0 0 15 9" aria-hidden>
              <rect x=".5" y=".5" width="14" height="8" rx="2" fill="#f2f2f2" stroke="#444c55" />
              <path d="M4.500 6L7.500 3l3 3z" fill="#333" />
            </svg>
            <Caret />
          </button>
        </nav>
      </div>
    </header>
  )
}

function FileTabs() {
  return (
    <div className="flex h-[30px] items-start bg-[#acacb4] pl-[3px]">
      <div className="relative flex h-[27px] flex-1 items-end bg-linear-to-b from-[#a3a3a3] to-[#8a8a8a]">
        <svg width="158" height="24" viewBox="0 0 158 24" className="absolute bottom-0 left-4" aria-hidden>
          <defs>
            <linearGradient id="tab" x1="0" y1="0" x2="0" y2="1">
              <stop offset="0" stopColor="#dedede" />
              <stop offset="1" stopColor="#adadb0" />
            </linearGradient>
          </defs>
          <path d="M0 24C8 22 6 1 15 1h108c9 0 8 21 17 23z" fill="url(#tab)" stroke="#eee" strokeWidth="0.8" />
          <path d="M134 4h14c7 0 9 6 9 15h-15c-6-2-5-12-8-15z" fill="#8a8a8a" stroke="#555" />
          <circle cx="146" cy="12" r="4.5" fill="none" stroke="#666" />
          <path d="M146 9.500v5M143.500 12h5" stroke="#bbb" strokeWidth="1.5" />
        </svg>
        <div className="relative flex h-6 w-[150px] items-center pl-8 text-black">
          <span>Disegno1*</span>
          <button type="button" aria-label="Chiudi disegno" className="mr-[18px] ml-auto">
            <Icon w={8} h={8}>
              <path d="M1 1l6 6M7 1L1 7" stroke="#777" strokeWidth="1.7" />
            </Icon>
          </button>
        </div>
        <button type="button" aria-label="Nuovo disegno" className="relative h-6 w-6" />
      </div>
    </div>
  )
}

/* ---------- drawing area ---------- */

function ViewCube() {
  return (
    <div className="absolute top-[34px] right-3 h-[100px] w-[94px]">
      <svg width="94" height="100" viewBox="0 0 94 100" aria-hidden>
        <circle cx="47" cy="50" r="38" fill="none" stroke="#2c2c2c" strokeWidth="9" />
        <rect x="28.5" y="31.5" width="37" height="37" fill="#a6a6a6" stroke="#8d8d8d" />
        <rect x="36" y="39" width="22" height="22" fill="#9b9da1" />
      </svg>
      <div className="absolute inset-0 grid grid-cols-[14px_1fr_14px] grid-rows-[18px_1fr_18px] place-items-center font-['Liberation_Sans',sans-serif] text-[13px] font-bold text-[#b5b5b5]">
        <span className="col-start-2">N</span>
        <span className="col-start-1 row-start-2">O</span>
        <button type="button" className="col-start-2 row-start-2 text-[8px] text-[#444a52]">ALTO</button>
        <span className="col-start-3 row-start-2">E</span>
        <span className="col-start-2 row-start-3">S</span>
      </div>
    </div>
  )
}

const navTools = [
  {
    label: "Ruota di navigazione",
    caret: true,
    icon: (
      <Icon w={24} h={24}>
        <path d="M12 1.500h10.500V12A10.500 10.500 0 1 1 12 1.500z" stroke="#2c2c2c" />
        <circle cx="12" cy="12" r="6" stroke="#2c2c2c" strokeWidth="1.5" />
        <path d="M7.500 16.500l-3 3M16.500 16.500l3 3" stroke="#2c2c2c" />
      </Icon>
    ),
  },
  {
    label: "Pan",
    icon: (
      <Icon w={24} h={24}>
        <path
          d="M8 22C5 18 2 14 1 12c0-2 2-2 3-1l3 3L4.500 5c0-2 2-2 2.500-.5L9.500 11V2.500c0-2 2.500-2 2.500 0V11l2-7.500c.5-2 2.500-1.500 2.300.5L15.500 12l4-5c1-1 2.500 0 2 1.500L18 17l-1.500 5z"
          stroke="#2c2c2c"
          strokeWidth="1.2"
        />
      </Icon>
    ),
  },
  {
    label: "Zoom",
    caret: true,
    icon: (
      <Icon w={24} h={24}>
        <path d="M1 1l15 14M16 1L1 15M1 5V1h4M12 1h4v4M1 11v4h4" stroke="#2c2c2c" strokeWidth="1.3" />
        <circle cx="16" cy="15.5" r="4.5" fill="#4b4b4b" stroke="#2c2c2c" />
        <path d="M19.500 19l4 4" stroke="#2c2c2c" strokeWidth="2.5" />
      </Icon>
    ),
  },
  {
    label: "Orbita",
    caret: true,
    icon: (
      <Icon w={24} h={24}>
        <path d="M10.500 22V6H8l4-5 4 5h-2.500v16z" stroke="#2c2c2c" />
        <path d="M9 10c-10 1-11 5-3 6M15 10c10 1 11 6 1 6.500H8M8 13l-4 3 4 3z" stroke="#2c2c2c" strokeWidth="1.3" />
      </Icon>
    ),
  },
  {
    label: "ShowMotion",
    icon: (
      <Icon w={24} h={24}>
        <path d="M.5 1.500h6v6h-6zM8.500 1.500h6v6h-6zM16.500 1.500h6v6h-6zM.5 10.500h16v13H.5z" stroke="#2c2c2c" />
        <path d="M5 13v8l7-4z" fill="#2c2c2c" stroke="none" />
      </Icon>
    ),
  },
]

function NavBar() {
  return (
    <div className="absolute top-[189px] right-1 flex h-[211px] w-8 flex-col items-center rounded-xs border border-[#5c5c5c] bg-[#4b4b4b]">
      <button type="button" aria-label="Chiudi barra" className="mt-px mr-[2px] mb-[5px] h-2 w-2 self-end rounded-full bg-[#2d2d2d]" />
      {navTools.map((tool) => (
        <button key={tool.label} type="button" aria-label={tool.label} className="flex flex-col items-center pt-[3px]">
          {tool.icon}
          {tool.caret && <Caret className="mt-[7px] mb-1 brightness-50" />}
        </button>
      ))}
      <button type="button" aria-label="Menu barra" className="mt-auto mr-[2px] mb-[2px] h-2 w-2 self-end rounded-full bg-[#2d2d2d]" />
    </div>
  )
}

function CommandLine() {
  return (
    <div className="absolute right-[252px] bottom-0 left-[270px] flex h-7 items-stretch border border-[#5f5f5f] bg-[#b2b2b2]">
      <div className="flex w-[55px] items-center justify-end gap-[9px] bg-linear-to-b from-[#3a3a3a] to-[#222] pr-1 pb-[3px]">
        <button type="button" aria-label="Chiudi riga di comando">
          <Icon w={9} h={9}>
            <path d="M1 1l7 7M8 1L1 8" stroke="#b8b8b8" strokeWidth="1.8" />
          </Icon>
        </button>
        <button type="button" aria-label="Personalizza">
          <Icon>
            <path d="M7 6C6 3 4 .5 1.500 1.500L4 4v2L2 7 .5 4.500C0 7 3 9 5.500 8l6 6.500c1.500 1 3-.5 2-2z" stroke="#d0d0d0" fill="#555" />
          </Icon>
        </button>
      </div>
      <button type="button" aria-label="Comandi recenti" className="ml-1 flex items-center gap-1 pb-[3px]">
        <Icon w={16} h={14}>
          <rect x=".5" y=".5" width="15" height="13" fill="#989ca0" stroke="#5b6269" />
          <path d="M3 3.500l4 3-4 3M8 10.500h5" strokeWidth="1.3" />
        </Icon>
        <Caret />
      </button>
      <input
        aria-label="Riga di comando"
        placeholder="Digitare un comando"
        className="mb-[3px] ml-[7px] min-w-0 flex-1 bg-transparent font-['DejaVu_Sans_Mono','Liberation_Mono',monospace] text-xs italic outline-none placeholder:text-[#6b6b6b]"
      />
      <button type="button" aria-label="Cronologia" className="mr-1 pb-[3px]">
        <svg width="7" height="4" viewBox="0 0 7 4" aria-hidden>
          <path d="M0 4h7L3.500 0z" fill="#222" />
        </svg>
      </button>
    </div>
  )
}

function DrawingArea() {
  return (
    <div className="relative min-w-0 flex-1 bg-black">
      <div className="absolute top-[12px] right-3 flex h-2 items-end gap-[10px]">
        <button type="button" aria-label="Riduci disegno" className="h-[3px] w-[10px] bg-[#ddd]" />
        <button type="button" aria-label="Ripristina disegno">
          <Icon w={10} h={10}>
            <path d="M3 2V1h6v7H8M1 3h6v6H1z" stroke="#ddd" strokeWidth="1.5" />
          </Icon>
        </button>
        <button type="button" aria-label="Chiudi disegno">
          <Icon w={10} h={10}>
            <path d="M1.500 1l7 8M8.500 1l-7 8" stroke="#eee" strokeWidth="2" />
          </Icon>
        </button>
      </div>
      <ViewCube />
      <button type="button" className="absolute top-[146px] right-[37px] flex h-[17px] w-[47px] items-center gap-1 rounded-xs border border-[#a2a2ad] bg-[#85858e] pl-1 font-['Liberation_Sans',sans-serif] text-[11px] text-[#4c4c55]">
        WCS
        <svg width="8" height="5" viewBox="0 0 8 5" aria-hidden>
          <path d="M.5 .5h7L4 4.500z" fill="#8d8d97" stroke="#a9a9b4" />
        </svg>
      </button>
      <NavBar />
      {/* UCS axes */}
      <svg width="76" height="76" viewBox="0 0 76 76" className="absolute bottom-[9px] left-[13px]" stroke="#fff" fill="none" aria-hidden>
        <path d="M4.500 68V19M4 68.500h51M.5 64.500h9v9h-9z" />
        <path d="M6.500 2l6 6 6-6M12.500 8v6M59 54l13 13M72 54L59 67" strokeWidth="0.9" />
      </svg>
      {/* Cursor */}
      <svg width="68" height="50" viewBox="0 0 68 50" className="absolute right-[169px] bottom-0" stroke="#fff" fill="none" aria-hidden>
        <path d="M33.500 0v50M0 34.500h68M30.500 31.500h6v6h-6z" />
      </svg>
      <CommandLine />
    </div>
  )
}

const navArrows = [
  { label: "Primo layout", d: "M4.500 1v9M11 1v9L6 5.500z" },
  { label: "Layout precedente", d: "M10 1v9L5 5.500z" },
  { label: "Layout successivo", d: "M5 1v9l5-4.500z" },
  { label: "Ultimo layout", d: "M10.500 1v9M4 1v9l5-4.500z" },
]

function LayoutTabs() {
  return (
    <div className="flex h-4 items-start border-b border-white bg-[#f0f0f0] pl-[5px] text-black">
      <div className="flex pt-[3px]">
        {navArrows.map((a) => (
          <button key={a.label} type="button" aria-label={a.label} className="border-r border-[#bbb]">
            <Icon w={14} h={12}>
              <path d={a.d} fill="#666" stroke="#666" strokeWidth="0.9" />
            </Icon>
          </button>
        ))}
      </div>
      <div className="relative ml-1 flex h-[15px] items-center font-['Liberation_Sans',sans-serif] text-[11px]">
        <svg width="174" height="15" viewBox="0 0 174 15" className="absolute inset-0" fill="none" aria-hidden>
          <path d="M0 0h56l-5 15H7z" fill="#000" />
          <path d="M56 0l-5 14M113 0l-5 14M167 0l-5 14" stroke="#555" />
        </svg>
        <button type="button" className="relative w-[54px] text-center leading-4 text-white">Modello</button>
        <button type="button" className="relative w-[54px] text-center leading-4">Layout1</button>
        <button type="button" className="relative w-[56px] text-center leading-4">Layout2</button>
      </div>
      <div className="ml-auto flex h-[15px] w-[467px] items-center pt-[2px]">
        <Icon w={6} h={8}>
          <path d="M5 1L1.500 4 5 7" strokeWidth="1.7" />
        </Icon>
        <span className="ml-auto h-full w-[17px] bg-[#cdcdcd]" />
        <Icon w={6} h={8} className="mr-[29px] ml-[6px]">
          <path d="M1 1l3.500 3L1 7" strokeWidth="1.7" />
        </Icon>
      </div>
    </div>
  )
}

function Workspace() {
  return (
    <main className="relative flex min-h-[300px] flex-1 flex-col">
      <div className="flex min-h-0 flex-1 pt-[3px] pl-[3px]">
        <DrawingArea />
        <div className="flex w-[17px] flex-col items-center border-b border-[#999] bg-[#f0f0f0]">
          <Icon w={8} h={6} className="mt-[8px]">
            <path d="M1 5l3-3.500L7 5" strokeWidth="1.7" />
          </Icon>
          <span className="mt-1 h-[17px] w-full bg-[#cdcdcd]" />
          <Icon w={8} h={6} className="mt-auto mb-[6px]">
            <path d="M1 1l3 3.500L7 1" strokeWidth="1.7" />
          </Icon>
        </div>
        <span className="w-[2px] bg-white" />
        <span className="w-[5px] bg-[#acacb4]" />
      </div>
      <LayoutTabs />
      <div className="pointer-events-none absolute top-0 right-[19px] bottom-[13px] left-0 z-20 border-[6px] border-[#ff0000]" />
    </main>
  )
}

/* ---------- status bar ---------- */

const modes = [
  { label: "DEDUCI", width: "w-[47px]" },
  { label: "SNAP", width: "w-[36px]" },
  { label: "GRIGLIA", width: "w-[47px]", hover: true },
  { label: "ORTO", width: "w-[37px]" },
  { label: "POLARE", width: "w-[49px]", on: true },
  { label: "OSNAP", width: "w-[43px]" },
  { label: "3DOSNAP", width: "w-[56px]" },
  { label: "OPUNTAMENTO", width: "w-[91px]" },
  { label: "UCSD", width: "w-[36px]", on: true },
  { label: "DIN", width: "w-[25px]", on: true },
  { label: "SLN", width: "w-[27px]" },
  { label: "TPY", width: "w-[26px]" },
  { label: "SC", width: "w-[20px]" },
  { label: "AM", width: "w-[22px]" },
]

const compass = (
  <path d="M8 .5l2.500 5.500-.5 3 5.500 4.500V15H12l-4-4-4 4H.5v-1.500L6 9l-.5-3zM8 3v8" fill="#f3f3f3" strokeWidth="1.2" />
)

const trayButton = "flex h-full items-center justify-center border-l border-[#555] bg-linear-to-b from-[#c4c4c4] to-[#9c9c9c]"

function StatusBar() {
  return (
    <footer className="relative flex h-[22px] shrink-0 border-t border-black bg-linear-to-b from-[#f4f6fa] to-[#c9ccd2] pl-[3px] text-xs text-black">
      <div className="flex w-[195px] shrink-0 items-center pt-px pl-3 text-[11px] text-[#999]">1213.4782, 436.5522 , 0.0000</div>
      <div className="flex border-r border-[#555] font-[Roboto,sans-serif]">
        {modes.map((m) => (
          <div key={m.label} className="relative flex">
            <button
              type="button"
              aria-pressed={!!m.on}
              className={`${m.width} border-l border-[#555] ${
                m.hover
                  ? "bg-linear-to-b from-white to-[#c4e6f0]"
                  : m.on
                    ? "bg-linear-to-b from-[#c9eaf1] via-[#8fc9d8] to-[#9fd3e0]"
                    : "bg-linear-to-b from-[#c4c4c4] to-[#9c9c9c]"
              }`}
            >
              {m.label}
            </button>
            {m.hover && (
              <>
                <div
                  role="tooltip"
                  className="absolute -top-[21px] left-[22px] z-10 flex h-[26px] w-[178px] items-center justify-center border border-[#767676] bg-[#f1f2f7] font-['Open_Sans',sans-serif] text-[11px] whitespace-nowrap text-[#575757]"
                >
                  Visualizzazione della griglia (F7)
                </div>
                <svg width="56" height="104" viewBox="0 0 56 104" className="pointer-events-none absolute -top-[96px] -left-[34px] z-30" aria-hidden>
                  <path d="M1 8l14 6.500L23 1l23 82 9-3-12 23-24-12 7-1z" fill="#ff1e1e" />
                </svg>
              </>
            )}
          </div>
        ))}
      </div>

      <div className="ml-auto flex">
        <button type="button" aria-label="Modello" className={`${trayButton} w-[22px]`}>
          <Icon w={15} h={14}>
            <path d="M1 1h13v12H1z" fill="#fff" strokeWidth="1.3" />
            <path d="M4.500 4v6h6z" />
          </Icon>
        </button>
        <button type="button" aria-label="Layout" className={`${trayButton} w-[22px] border-r`}>
          <Icon w={15} h={14}>
            <path d="M1 1h13v7H1zM7.500 1v7M1 10.500h6v2H1zM9 10.500h5v2H9z" fill="#f4f4f4" strokeWidth="1.2" />
          </Icon>
        </button>
        <button type="button" className={`${trayButton} ml-3 w-[50px] gap-[2px]`}>
          <Icon>{compass}</Icon>
          1:1
          <Caret big />
        </button>
        <button type="button" aria-label="Visibilità annotazione" className={`${trayButton} w-[22px]`}>
          <Icon>
            {compass}
            <circle cx="12.5" cy="9.5" r="2.5" fill="#ffe38a" stroke="#f0901e" />
            <path d="M12.500 12.500v3" strokeWidth="2" />
          </Icon>
        </button>
        <button type="button" aria-label="Scala automatica" className={`${trayButton} w-[23px] border-r`}>
          <Icon className="opacity-50">
            {compass}
            <path d="M7 2L2 7h4l-3 5" />
          </Icon>
        </button>
        <button type="button" aria-label="Area di lavoro" className={`${trayButton} ml-[5px] w-[22px]`}>
          <Icon>
            {gear}
            <path d="M16 11v5h-5z" fill="#000" stroke="none" />
          </Icon>
        </button>
        <button type="button" aria-label="Blocca interfaccia" className={`${trayButton} w-[22px]`}>
          <Icon>
            <path d="M8.500 7V4c0-4 6.500-4 6.500 0v3h-2V4.500c0-1.500-2.500-1.500-2.500 0V7" fill="#eee" />
            <rect x="1" y="7" width="10" height="8" fill="#f2f2f2" strokeWidth="1.3" />
            <path d="M6 9.500v3" strokeWidth="1.5" />
          </Icon>
        </button>
        <button type="button" aria-label="Prestazioni grafiche" className={`${trayButton} w-[23px]`}>
          <Icon w={14} h={14}>
            <circle cx="7" cy="7" r="6" fill="#707070" stroke="#8b8b8b" />
            <path d="M4 3l4 5 4-5" stroke="#ccc" strokeWidth="1.5" />
          </Icon>
        </button>
        <button type="button" aria-label="Isola oggetti" className={`${trayButton} w-[30px]`}>
          <span className="flex h-[18px] w-[22px] items-center justify-center border border-[#555] bg-[#d2d2d2]"><BulbIcon /></span>
        </button>
        <button type="button" aria-label="Menu barra di stato" className={`${trayButton} w-3 border-r`}>
          <Caret />
        </button>
        <button type="button" aria-label="Schermo intero" className="flex w-6 items-center justify-center bg-[#b5b5b5]">
          <Icon w={14} h={14}>
            <path d="M.5 .5h13v13H.5z" fill="#f5f5f5" />
            <path d="M1 2.500h12" strokeWidth="2" />
          </Icon>
        </button>
      </div>
    </footer>
  )
}

function Taskbar() {
  return (
    <svg className="block h-[9px] w-full shrink-0 border-b border-white bg-[#43373f]" height="8" viewBox="0 0 1363 8" preserveAspectRatio="xMinYMin slice" aria-hidden>
      <defs>
        <pattern id="wall" width="173" height="8" patternUnits="userSpaceOnUse">
          <rect width="173" height="8" fill="#43383f" />
          <path d="M8 0l7 8h6l-5-8zM43 2l9 6h-14zM78 0h9l-4 6zM112 3l8 5h-12z" fill="#745a7a" />
          <path d="M28 0l4 8h6l-2-8zM64 4l6-4 3 8zM98 0l8 7-3 1zM140 1l9 7h-5z" fill="#2a2228" />
          <path d="M54 0l6 3-3 3zM132 4l4-4 3 5zM158 3l6 3-8 2z" fill="#9a7488" />
        </pattern>
      </defs>
      <rect width="1363" height="8" fill="url(#wall)" />
      <path d="M55.500 9V1.500h52V9M116.500 9V1.500h57V9M240.500 9V1.500h57V9M548.500 9V1.500h57V9" fill="#66615f" stroke="#999" />
      <path d="M67 5h14v3H67z" fill="#cdbb72" />
      <circle cx="146" cy="12" r="9" fill="#d3312b" />
      <g fill="#101c26" strokeWidth="2">
        <path d="M194 9V6h26v3" stroke="#29b4e8" />
        <path d="M256 9V6h26v3" stroke="#f0761c" />
        <path d="M441 9V6h26v3" stroke="#e83d92" />
      </g>
      <path d="M314 4h32v4h-32zM561 4h32v4h-32z" fill="#f3c6c6" />
      <path d="M314 4h12l-8 4h-4zM561 4h12l-8 4h-4zM331 5l3 3h-6zM577 5l3 3h-6z" fill="#d2262b" />
      <path d="M376 4h32v4h-32z" fill="#8fc4c2" />
      <path d="M386 5h14v3h-14z" fill="#0f5d63" />
      <rect x="500" y="4" width="31" height="8" rx="3" fill="#fff" />
    </svg>
  )
}

export default function App() {
  return (
    <div className="flex h-screen min-w-[1340px] flex-col overflow-hidden bg-white font-['Open_Sans','Noto_Sans',sans-serif] text-[11px] leading-4 text-[#3a3a3a]">
      <Header />
      <Ribbon />
      <FileTabs />
      <Workspace />
      <StatusBar />
      <Taskbar />
    </div>
  )
}
